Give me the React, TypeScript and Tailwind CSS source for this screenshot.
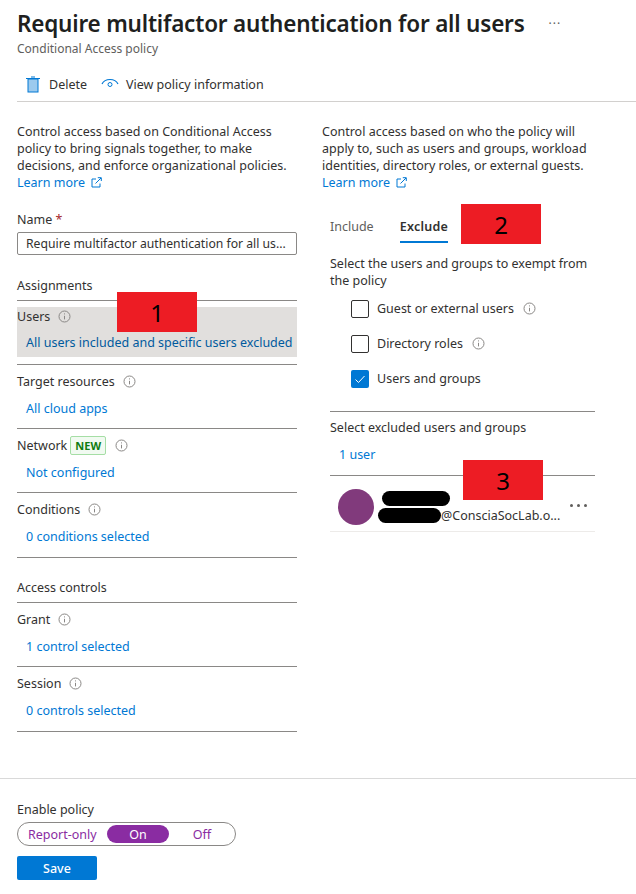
import React from "react";

const Info = () => (
  <svg width="13" height="13" viewBox="0 0 13 13" fill="none" className="shrink-0">
    <circle cx="6.5" cy="6.5" r="5.5" stroke="#8a8886" strokeWidth="1" />
    <path d="M6.5 5.8v3.6" stroke="#8a8886" strokeWidth="1" />
    <rect x="6" y="3.4" width="1" height="1" fill="#8a8886" />
  </svg>
);

const External = () => (
  <svg width="11" height="11" viewBox="0 0 11 11" fill="none" className="ml-[6px]">
    <path d="M5 2H1v8h8V6.5" stroke="#0078d4" strokeWidth="1" />
    <path d="M4.5 6.5 10 1M6.8 .7H10.300V4" stroke="#0078d4" strokeWidth="1" />
  </svg>
);

const Marker = ({ n, className }: { n: string; className: string }) => (
  <div className={`absolute w-[80px] h-[40px] bg-[#ed1c24] flex items-center justify-center text-[24px] text-black z-10 ${className}`}>{n}</div>
);

const Row = ({ label, value, badge, active }: { label: string; value: string; badge?: boolean; active?: boolean }) => (
  <div className="h-[64px] border-b border-[#8a8886] pt-[6px]">
    <div className={`h-[50px] ${active ? "bg-[#e1dfdd]" : ""}`}>
      <div className={`flex items-center ${active ? "h-[18px]" : "h-[20px]"}`}>
        <span>{label}</span>
        {badge && (
          <span className="ml-[3px] h-[19px] px-[4px] flex items-center border border-[#a5dea5] rounded-[2px] bg-[#f1faf1] text-[#107c10] text-[11px] font-bold">NEW</span>
        )}
        <span className={badge ? "ml-[9px]" : "ml-[8px]"}><Info /></span>
      </div>
      <div className={`pl-[9px] leading-[20px] whitespace-nowrap mt-[8px] ${active ? "text-[#005a9e]" : "text-[#0078d4]"}`}>{value}</div>
    </div>
  </div>
);

const Check = ({ label, info, checked }: { label: string; info?: boolean; checked?: boolean }) => (
  <div className="flex items-center h-[35px] pl-[21px]">
    {checked ? (
      <span className="w-[18px] h-[18px] rounded-[2px] bg-[#0078d4] flex items-center justify-center">
        <svg width="12" height="12" viewBox="0 0 12 12" fill="none"><path d="M1.500 6.500 4.500 9.500 10.500 3" stroke="#fff" strokeWidth="1" /></svg>
      </span>
    ) : (
      <span className="w-[18px] h-[18px] rounded-[2px] border border-[#323130]" />
    )}
    <span className="ml-[8px]">{label}</span>
    {info && <span className="ml-[9px]"><Info /></span>}
  </div>
);

function Inner({ label, value }: { label: string; value: string }) {
  return (
    <div className="pt-[6px]">
      <div className="flex items-center h-[20px]">
        <span>{label}</span>
        <span className="ml-[8px]"><Info /></span>
      </div>
      <div className="pl-[9px] mt-[8px] leading-[20px] text-[#0078d4] whitespace-nowrap">{value}</div>
    </div>
  );
}

export default function App() {
  return (
    <div className="relative w-[636px] h-[894px] bg-white text-[#323130] text-[12.5px] leading-[17px] overflow-hidden" style={{ fontFamily: '"Noto Sans", "Open Sans", sans-serif' }}>
      <Marker n="1" className="left-[117px] top-[292px]" />
      <Marker n="2" className="left-[461px] top-[204px]" />
      <Marker n="3" className="left-[463px] top-[460px]" />

      <div className="pl-[17px]">
        <div className="flex items-start pt-[8px]">
          <h1 className="text-[22.5px] leading-[32px] font-semibold text-[#201f1e] whitespace-nowrap tracking-[-0.2px]">Require multifactor authentication for all users</h1>
          <span className="ml-[24px] mt-[6px] text-[#605e5c] text-[12px] leading-[20px] tracking-[1px]">···</span>
        </div>
        <div className="text-[12px] text-[#605e5c] leading-[16px] mt-[1px]">Conditional Access policy</div>
        <div className="flex items-center h-[34px] mt-[11px] border-b border-[#d2d0ce] pl-[9px]">
          <svg width="14" height="17" viewBox="0 0 14 17" fill="none">
            <rect x="2" y="3" width="10" height="13" fill="#9ccaee" stroke="#0078d4" strokeWidth="1" />
            <path d="M0 2.500h14M5 1h4" stroke="#0078d4" strokeWidth="1.200" />
          </svg>
          <span className="ml-[9px]">Delete</span>
          <svg width="18" height="12" viewBox="0 0 18 12" fill="none" className="ml-[14px] mb-[3px]">
            <path d="M1 7C4 1 14 1 17 7" stroke="#0078d4" strokeWidth="1.200" />
            <circle cx="9" cy="7.500" r="2" stroke="#0078d4" strokeWidth="1" />
          </svg>
          <span className="ml-[7px]">View policy information</span>
        </div>
      </div>

      <div className="flex pl-[17px] pt-[21px]">
        <div className="w-[280px]">
          <p>Control access based on Conditional Access policy to bring signals together, to make decisions, and enforce organizational policies.</p>
          <div className="flex items-center text-[#0078d4]">Learn more<External /></div>

          <div className="mt-[20px] leading-[17px]">Name <span className="text-[#a4262c]">*</span></div>
          <div className="mt-[4px] h-[23px] border border-[#8a8886] rounded-[2px] px-[8px] flex items-center whitespace-nowrap">
            <span className="text-[12.2px]">Require multifactor authentication for all us...</span>
          </div>

          <div className="mt-[22px] h-[24px] border-b border-[#8a8886]">Assignments</div>
          <Row label="Users" value="All users included and specific users excluded" active />
          <Row label="Target resources" value="All cloud apps" />
          <Row label="Network" value="Not configured" badge />
          <div className="h-[65px] border-b border-[#8a8886]"><Inner label="Conditions" value="0 conditions selected" /></div>

          <div className="mt-[21px] h-[24px] border-b border-[#8a8886]">Access controls</div>
          <Row label="Grant" value="1 control selected" />
          <div className="h-[65px] border-b border-[#8a8886]"><Inner label="Session" value="0 controls selected" /></div>
        </div>

        <div className="w-[290px] ml-[25px]">
          <p className="w-[285px]">Control access based on who the policy will apply to, such as users and groups, workload identities, directory roles, or external guests.</p>
          <div className="flex items-center text-[#0078d4]">Learn more<External /></div>

          <div className="ml-[8px] flex mt-[18px] h-[34px] gap-[26px]">
            <div className="pt-[9px] text-[#605e5c]">Include</div>
            <div className="pt-[9px] font-semibold tracking-[0.25px] border-b-2 border-[#0078d4] h-[34px]">Exclude</div>
          </div>

          <div className="ml-[8px] w-[265px]">
            <p className="mt-[12px]">Select the users and groups to exempt from the policy</p>
            <div className="mt-[2px]">
              <Check label="Guest or external users" info />
              <Check label="Directory roles" info />
              <Check label="Users and groups" checked />
            </div>
            <div className="mt-[15px] border-t border-b border-[#8a8886] pt-[7px] h-[65px]">
              <div>Select excluded users and groups</div>
              <div className="pl-[9px] mt-[10px] text-[#0078d4]">1 user</div>
            </div>
            <div className="h-[56px] border-b border-[#edebe9] flex items-center pl-[8px] pr-[8px] pt-[7px]">
              <span className="w-[36px] h-[36px] rounded-full bg-[#813a7c] shrink-0" />
              <div className="relative ml-[5px] flex-1 pt-[17px]">
                <span className="absolute left-[3px] top-[1px] w-[68px] h-[15px] rounded-full bg-black" />
                <span className="absolute left-[-1px] top-[18px] w-[63px] h-[15px] rounded-full bg-black" />
                <div className="pl-[62px] whitespace-nowrap">@ConsciaSocLab.o...</div>
              </div>
              <span className="flex gap-[4px] mb-[3px] shrink-0">
                <i className="w-[3px] h-[3px] rounded-full bg-[#605e5c]" />
                <i className="w-[3px] h-[3px] rounded-full bg-[#605e5c]" />
                <i className="w-[3px] h-[3px] rounded-full bg-[#605e5c]" />
              </span>
            </div>
          </div>
        </div>
      </div>

      <div className="absolute left-0 right-0 bottom-0 h-[116px] border-t border-[#d9d9d9] pl-[17px] pt-[22px]">
        <div>Enable policy</div>
        <div className="mt-[4px] w-[219px] h-[24px] rounded-full border border-[#8a8886] flex items-center text-[#8a2ca2]">
          <span className="w-[89px] pl-[10px] whitespace-nowrap">Report-only</span>
          <span className="w-[62px] h-[18px] rounded-full bg-[#8a2ca2] text-white flex items-center justify-center">On</span>
          <span className="flex-1 text-center">Off</span>
        </div>
        <button className="mt-[10px] block w-[80px] h-[24px] bg-[#0078d4] text-white rounded-[2px] font-medium">Save</button>
      </div>
    </div>
  );
}
